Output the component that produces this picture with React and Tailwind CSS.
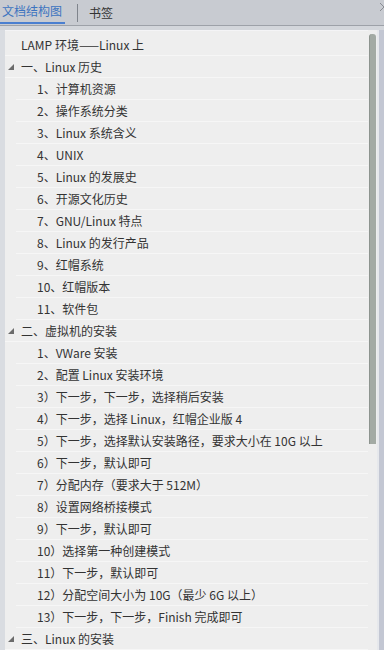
const items = [
  { t: "LAMP 环境——Linux 上", l: 0 },
  { t: "一、Linux 历史", l: 0, open: true },
  { t: "1、计算机资源", l: 1 },
  { t: "2、操作系统分类", l: 1 },
  { t: "3、Linux 系统含义", l: 1 },
  { t: "4、UNIX", l: 1 },
  { t: "5、Linux 的发展史", l: 1 },
  { t: "6、开源文化历史", l: 1 },
  { t: "7、GNU/Linux 特点", l: 1 },
  { t: "8、Linux 的发行产品", l: 1 },
  { t: "9、红帽系统", l: 1 },
  { t: "10、红帽版本", l: 1 },
  { t: "11、软件包", l: 1 },
  { t: "二、虚拟机的安装", l: 0, open: true },
  { t: "1、VWare 安装", l: 1 },
  { t: "2、配置 Linux 安装环境", l: 1 },
  { t: "3）下一步，下一步，选择稍后安装", l: 1 },
  { t: "4）下一步，选择 Linux，红帽企业版 4", l: 1 },
  { t: "5）下一步，选择默认安装路径，要求大小在 10G 以上", l: 1 },
  { t: "6）下一步，默认即可", l: 1 },
  { t: "7）分配内存（要求大于 512M）", l: 1 },
  { t: "8）设置网络桥接模式", l: 1 },
  { t: "9）下一步，默认即可", l: 1 },
  { t: "10）选择第一种创建模式", l: 1 },
  { t: "11）下一步，默认即可", l: 1 },
  { t: "12）分配空间大小为 10G（最少 6G 以上）", l: 1 },
  { t: "13）下一步，下一步，Finish 完成即可", l: 1 },
  { t: "三、Linux 的安装", l: 0, open: true },
];

function Tri() {
  return (
    <svg width="6" height="6" viewBox="0 0 6 6" className="shrink-0">
      <path d="M6 0 L6 6 L0 6 Z" fill="#6b6b6b" />
    </svg>
  );
}

export default function App() {
  return (
    <div
      className="w-[384px] h-[650px] overflow-hidden bg-[#c8cbd1] flex flex-col"
      style={{ fontFamily: '"Microsoft YaHei", "Noto Sans CJK SC", sans-serif' }}
    >
      <div className="h-[25px] flex items-stretch shrink-0 relative">
        <div className="w-[65px] flex flex-col">
          <div className="flex-1 flex items-center pl-[2px] text-[12px] text-[#3d74c0]">文档结构图</div>
          <div className="h-[2px] bg-[#4a7fd0] mb-[1px]" />
        </div>
        <div className="w-[24px] flex items-center justify-center">
          <div className="w-px h-[18px] bg-[#7f848c]" />
        </div>
        <div className="flex items-center text-[12px] text-[#333]">书签</div>
        <svg className="absolute right-0 top-[3px]" width="4" height="8" viewBox="0 0 4 8">
          <path d="M0 0 L4 4 M0 8 L4 4" stroke="#8a8d93" strokeWidth="1" fill="none" />
        </svg>
      </div>
      <div className="h-px bg-[#9da1a8] shrink-0" />
      <div className="h-[4px] bg-[#d3d6db] shrink-0" />
      <div className="flex-1 flex min-h-0 pl-[5px] bg-[#d9dce1]">
        <div className="flex-1 bg-[#eeeeee] border-t border-[#f4f4f6] pt-[3px] min-w-0">
          {items.map((it, i) =>
            it.l === 0 ? (
              <div
                key={i}
                className="h-[22px] flex items-center border-b border-[#f6f6f6] text-[12px] text-[#333] whitespace-nowrap pl-[3px]"
              >
                <span className="w-[13px] flex justify-start">{it.open ? <Tri /> : null}</span>
                <span>{it.t}</span>
              </div>
            ) : (
              <div
                key={i}
                className="h-[22px] flex items-center border-b border-[#f6f6f6] text-[12px] text-[#333] whitespace-nowrap ml-[11px] pl-[21px]"
              >
                {it.t}
              </div>
            )
          )}
        </div>
        <div className="w-[9px] bg-[#eeeeee] flex justify-center pt-[4px]">
          <div className="w-[7px] h-[410px] bg-[#a3aaa4] rounded-t-[3px] border-l border-[#8d948f]" />
        </div>
        <div className="w-[2px] bg-[#e6e8ec]" />
        <div className="w-[5px] bg-[#c3c7d3]" />
      </div>
    </div>
  );
}
